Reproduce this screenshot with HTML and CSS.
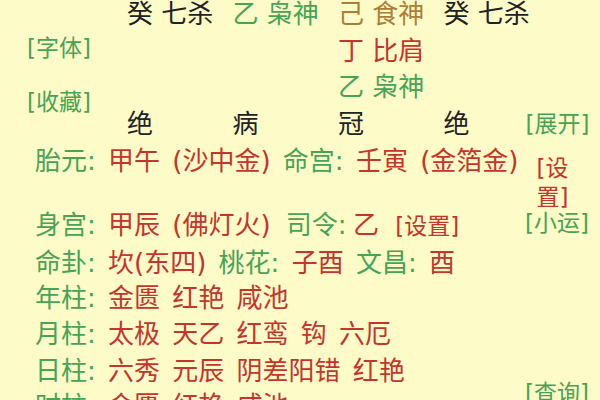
FILE: index.html
```html
<!DOCTYPE html>
<html lang="zh">
<head>
<meta charset="utf-8">
<link rel="stylesheet" href="styles.css">
</head>
<body>
<div class="top">
  <div class="side">
    <span class="link g">[字体]</span>
    <span class="link g second">[收藏]</span>
  </div>
  <div class="c2 r1 k">癸 七杀</div>
  <div class="c3 r1 g">乙 枭神</div>
  <div class="c4 r1 o">己 食神</div>
  <div class="c5 r1 k">癸 七杀</div>
  <div class="c4 r2 r">丁 比肩</div>
  <div class="c4 r3 g">乙 枭神</div>
  <div class="c2 r4 k">绝</div>
  <div class="c3 r4 k">病</div>
  <div class="c4 r4 k">冠</div>
  <div class="c5 r4 k">绝</div>
  <div class="c6 r4 link g">[展开]</div>
</div>
<div class="info">
  <div class="main">
    <div class="row h64">
      <span class="txt"><span class="g">胎元:</span> <span class="r">甲午 (沙中金)</span> <span class="g">命宫:</span> <span class="r">壬寅 (金箔金)</span></span>
      <span class="set r">[设置]</span>
    </div>
    <div class="row h38"><span class="txt"><span class="g">身宫:</span> <span class="r">甲辰 (佛灯火)</span> <span class="g sl">司令:</span> <span class="r yi">乙</span> <span class="small r">[设置]</span></span></div>
    <div class="row h35"><span class="txt"><span class="g">命卦:</span> <span class="r">坎(东四)</span> <span class="g">桃花:</span> <span class="r">子酉</span> <span class="g">文昌:</span> <span class="r">酉</span></span></div>
    <div class="row h36"><span class="txt"><span class="g">年柱:</span> <span class="r">金匮 红艳 咸池</span></span></div>
    <div class="row h37"><span class="txt"><span class="g">月柱:</span> <span class="r">太极 天乙 红鸾 钩 六厄</span></span></div>
    <div class="row h35"><span class="txt"><span class="g">日柱:</span> <span class="r">六秀 元辰 阴差阳错 红艳</span></span></div>
    <div class="row h36"><span class="txt"><span class="g">时柱:</span> <span class="r">金匮 红艳 咸池</span></span></div>
  </div>
  <div class="aside">
    <span class="link g xiao">[小运]</span>
    <span class="link g cha">[查询]</span>
  </div>
</div>
</body>
</html>
```
FILE: styles.css
```css
html, body {
  margin: 0;
  padding: 0;
  background: #fdfbc8;
  overflow: hidden;
}
body {
  width: 600px;
  height: 400px;
  font-family: "DejaVu Sans", "Noto Sans CJK SC", sans-serif;
  font-size: 26px;
  line-height: 36px;
  color: #222;
}
.k { color: #222; }
.g { color: #47a455; }
.r { color: #c6342c; }
.o { color: #b07c35; }

.top {
  display: grid;
  grid-template-columns: 127px 105.5px 105.5px 105.5px 82px 75px;
  grid-template-rows: repeat(4, 36.7px);
  margin-top: -4px;
  white-space: nowrap;
}
.top > div { line-height: 36.7px; }
.side {
  grid-column: 1;
  grid-row: 1 / 5;
  display: flex;
  flex-direction: column;
  align-items: flex-start;
  padding-left: 27px;
  padding-top: 34px;
}
.link {
  font-size: 23px;
  line-height: 36px;
}
.side .second { margin-top: 18px; }
.c2 { grid-column: 2; }
.c3 { grid-column: 3; }
.c4 { grid-column: 4; }
.c5 { grid-column: 5; }
.c6 { grid-column: 6; }
.r1 { grid-row: 1; }
.r2 { grid-row: 2; }
.r3 { grid-row: 3; }
.r4 { grid-row: 4; }

.info {
  display: flex;
}
.main {
  width: 490px;
  padding-left: 35px;
  flex: none;
  word-spacing: 4px;
}
.row {
  display: flex;
  align-items: flex-start;
  white-space: nowrap;
}
.h64 { height: 64px; }
.h38 { height: 38px; }
.h37 { height: 37px; }
.h36 { height: 36px; }
.h35 { height: 35px; }
.set {
  white-space: normal;
  width: 36px;
  font-size: 23px;
  line-height: 29px;
  margin-left: 18px;
  margin-top: 11px;
  word-break: break-all;
  word-spacing: 0;
}
.sl { margin-left: 3px; }
.yi { margin-left: -6px; }
.small {
  font-size: 23px;
  margin-left: 4px;
}
.aside {
  display: flex;
  flex-direction: column;
  align-items: flex-start;
  white-space: nowrap;
}
.aside .xiao { margin-top: 62px; }
.aside .cha { margin-top: 134px; }
```
